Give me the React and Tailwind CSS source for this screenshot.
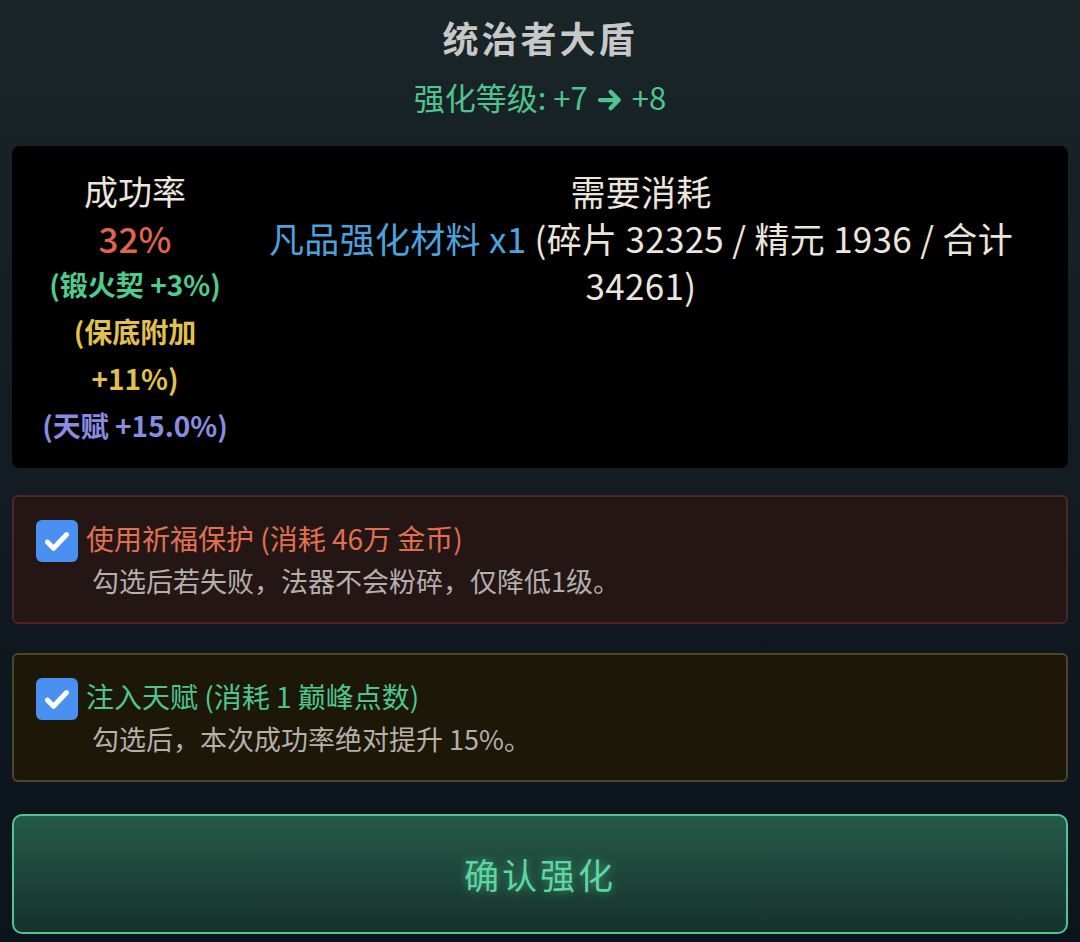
const font = { fontFamily: '"Noto Sans CJK SC", "Noto Sans", sans-serif' };

function Check() {
  return (
    <div className="mt-[2px] w-[42px] h-[42px] shrink-0 rounded-[6px] bg-[#4a90f0] flex items-center justify-center">
      <svg width="32" height="32" viewBox="0 0 24 24" fill="none">
        <path d="M4.8 12.8l4.6 4.6L19.2 7.2" stroke="#fff" strokeWidth="3.8" strokeLinecap="round" strokeLinejoin="round" />
      </svg>
    </div>
  );
}

function Arrow() {
  return (
    <svg width="30" height="30" viewBox="0 0 24 24" fill="none" className="inline-block align-[-5px] mx-[7px]">
      <path d="M4 12h15M12.5 5.5L19 12l-6.5 6.5" stroke="currentColor" strokeWidth="3.4" strokeLinecap="round" strokeLinejoin="round" />
    </svg>
  );
}

function Option({ box, titleColor, title, desc }) {
  return (
    <div className={`rounded-[6px] border-2 ${box} pl-[22px] pr-4 pt-[21px] pb-[19px]`}>
      <div className="flex items-start gap-2">
        <Check />
        <div className="flex flex-col">
          <div className={`text-[28px] leading-[40px] ${titleColor}`}>{title}</div>
          <div className="text-[27px] leading-[45px] text-[#b4b0aa] pl-[6px]">{desc}</div>
        </div>
      </div>
    </div>
  );
}

export default function App() {
  return (
    <div
      style={font}
      className="w-[1080px] h-[942px] bg-gradient-to-b from-[#1a2528] to-[#0b131c] px-3 pt-[13px] overflow-hidden"
    >
      <div className="text-center text-[36px] leading-[48px] font-bold tracking-[3px] text-[#c8c8c8]">统治者大盾</div>
      <div className="text-center text-[31px] leading-[40px] text-[#4ec58e] mt-[16px]">
        强化等级: +7<Arrow />+8
      </div>

      <div className="mt-[29px] bg-black rounded-lg pt-[21px] pb-[19px] px-6 flex gap-1">
        <div className="w-[198px] shrink-0 text-center leading-[47px]">
          <div className="text-[34px] text-[#ebe6dc]">成功率</div>
          <div className="text-[35px] text-[#e0644e] font-medium">32%</div>
          <div className="text-[28px] font-semibold text-[#4ecb8d]">(锻火契 +3%)</div>
          <div className="text-[28px] font-semibold text-[#e0c050]">(保底附加 +11%)</div>
          <div className="text-[28px] font-semibold text-[#8a8ce0]">(天赋 +15.0%)</div>
        </div>
        <div className="flex-1 text-center text-[35px] leading-[47px] tracking-[0.3px] text-[#ebe6dc]">
          <div>需要消耗</div>
          <div>
            <span className="text-[#4aa3dc]">凡品强化材料 x1</span> (碎片 32325 / 精元 1936 / 合计 34261)
          </div>
        </div>
      </div>

      <div className="mt-[27px] flex flex-col gap-[29px]">
        <Option
          box="bg-[#251616] border-[#4e2628]"
          titleColor="text-[#e0704f]"
          title="使用祈福保护 (消耗 46万 金币)"
          desc="勾选后若失败，法器不会粉碎，仅降低1级。"
        />
        <Option
          box="bg-[#1d1707] border-[#4f4528]"
          titleColor="text-[#4ec58e]"
          title="注入天赋 (消耗 1 巅峰点数)"
          desc="勾选后，本次成功率绝对提升 15%。"
        />
      </div>

      <button
        className="mt-[32px] w-full h-[120px] rounded-[10px] border-2 border-[#52c493] bg-gradient-to-b from-[#245a48] to-[#17322b] text-[35px] tracking-[3px] text-[#5fd6a2] [text-shadow:0_0_10px_rgba(80,220,160,0.6)]"
        style={font}
      >
        确认强化
      </button>
    </div>
  );
}
